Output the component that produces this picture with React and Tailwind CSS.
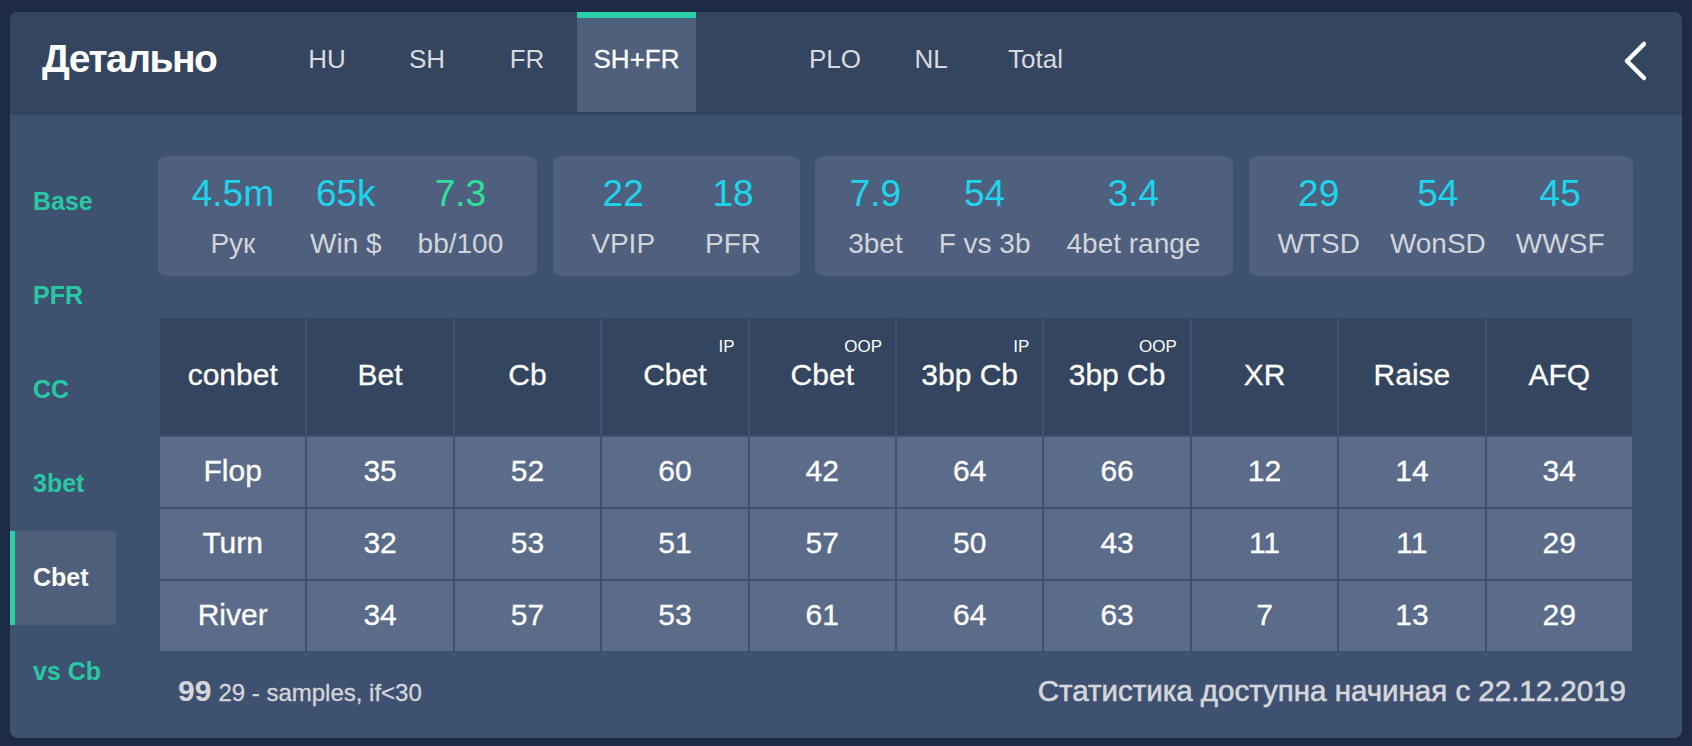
import React from "react";

const tabsLeft = [
  { label: "HU", cls: "w-[100px]" },
  { label: "SH", cls: "w-[100px]" },
  { label: "FR", cls: "w-[100px]" },
  { label: "SH+FR", cls: "w-[119px]", active: true },
];
const tabsRight = [
  { label: "PLO", cls: "w-[94px]" },
  { label: "NL", cls: "w-[98px]" },
  { label: "Total", cls: "w-[111px]" },
];

const nav = ["Base", "PFR", "CC", "3bet", "Cbet", "vs Cb"];

const statCards = [
  {
    cls: "w-[379px] gap-[36px]",
    items: [
      { v: "4.5m", l: "Рук" },
      { v: "65k", l: "Win $" },
      { v: "7.3", l: "bb/100", green: true },
    ],
  },
  {
    cls: "w-[247px] gap-[50px]",
    items: [
      { v: "22", l: "VPIP" },
      { v: "18", l: "PFR" },
    ],
  },
  {
    cls: "w-[418px] gap-[36px]",
    items: [
      { v: "7.9", l: "3bet" },
      { v: "54", l: "F vs 3b" },
      { v: "3.4", l: "4bet range" },
    ],
  },
  {
    cls: "w-[384px] gap-[30px]",
    items: [
      { v: "29", l: "WTSD" },
      { v: "54", l: "WonSD" },
      { v: "45", l: "WWSF" },
    ],
  },
];

const headers = [
  { t: "conbet" },
  { t: "Bet" },
  { t: "Cb" },
  { t: "Cbet", s: "IP" },
  { t: "Cbet", s: "OOP" },
  { t: "3bp Cb", s: "IP" },
  { t: "3bp Cb", s: "OOP" },
  { t: "XR" },
  { t: "Raise" },
  { t: "AFQ" },
];

const rows = [
  ["Flop", "35", "52", "60", "42", "64", "66", "12", "14", "34"],
  ["Turn", "32", "53", "51", "57", "50", "43", "11", "11", "29"],
  ["River", "34", "57", "53", "61", "64", "63", "7", "13", "29"],
];

export default function App() {
  return (
    <div className="h-[746px] bg-[#1d2b47] pt-[12px] px-[10px] font-['Liberation_Sans',Arial,sans-serif]">
      <div className="h-[726px] rounded-[8px] overflow-hidden bg-[#3f5171] flex flex-col">
        {/* Header */}
        <div className="h-[103px] shrink-0 bg-[#34455f] flex items-start pl-[32px] pr-[36px]">
          <div className="w-[235px] pt-[27px] text-[39px] font-bold tracking-[-1.5px] leading-none text-white">
            Детально
          </div>
          {tabsLeft.map((t) => (
            <div
              key={t.label}
              className={
                t.active
                  ? `${t.cls} h-[100px] border-t-[6px] border-[#2bcfa6] bg-[#4f607c] pt-[28px] text-center text-[26px] leading-none text-white [-webkit-text-stroke:0.3px_white]`
                  : `${t.cls} h-[100px] border-t-[6px] border-transparent pt-[28px] text-center text-[26px] leading-none text-[#d9dadf]`
              }
            >
              {t.label}
            </div>
          ))}
          <div className="w-[92px]" />
          {tabsRight.map((t) => (
            <div
              key={t.label}
              className={`${t.cls} h-[100px] border-t-[6px] border-transparent pt-[28px] text-center text-[26px] leading-none text-[#d9dadf]`}
            >
              {t.label}
            </div>
          ))}
          <div className="ml-auto mt-[29px]">
            <svg width="22" height="40" viewBox="0 0 22 40" fill="none">
              <polyline
                points="20,3 3,20 20,37"
                stroke="white"
                strokeWidth="4.5"
                strokeLinecap="round"
                strokeLinejoin="round"
              />
            </svg>
          </div>
        </div>

        {/* Body */}
        <div className="flex flex-1">
          {/* Side nav */}
          <div className="w-[106px] shrink-0 pt-[40px] flex flex-col">
            {nav.map((n) =>
              n === "Cbet" ? (
                <div
                  key={n}
                  className="w-[106px] h-[94px] flex items-center bg-[#4e5f7c] border-l-[5px] border-[#2bcfa6] pl-[18px] text-[25px] font-bold text-white"
                >
                  {n}
                </div>
              ) : (
                <div
                  key={n}
                  className="h-[94px] flex items-center pl-[23px] text-[25px] font-bold text-[#28c9a1]"
                >
                  {n}
                </div>
              )
            )}
          </div>

          {/* Main */}
          <div className="flex-1 ml-[42px] mr-[49px] pt-[41px] flex flex-col">
            <div className="flex justify-between">
              {statCards.map((c, i) => (
                <div
                  key={i}
                  className={`${c.cls} h-[120px] rounded-[8px] bg-[#4e607e] flex justify-center items-center`}
                >
                  {c.items.map((it) => (
                    <div key={it.l} className="flex flex-col items-center gap-[18px]">
                      <div
                        className={
                          it.green
                            ? "text-[37px] leading-none text-[#2ee09c]"
                            : "text-[37px] leading-none text-[#1dd5ec]"
                        }
                      >
                        {it.v}
                      </div>
                      <div className="text-[28px] leading-none text-[#d3d4da] whitespace-nowrap">
                        {it.l}
                      </div>
                    </div>
                  ))}
                </div>
              ))}
            </div>

            <div className="mt-[42px] ml-[2px] mr-[1px] grid grid-cols-10 gap-[2px]">
              {headers.map((h, i) => (
                <div
                  key={i}
                  className="relative h-[117px] bg-[#33455f] flex items-center justify-center text-[30px] leading-none text-white whitespace-nowrap pb-[4px] [-webkit-text-stroke:0.3px_white]"
                >
                  {h.t}
                  {h.s && (
                    <span className="absolute right-[13px] top-[20px] text-[17px] leading-none [-webkit-text-stroke:0px]">
                      {h.s}
                    </span>
                  )}
                </div>
              ))}
              {rows.map((r, ri) =>
                r.map((c, ci) => (
                  <div
                    key={`${ri}-${ci}`}
                    className="h-[70px] bg-[#5b6c8b] flex items-center justify-center text-[30px] leading-none text-white pb-[3px] [-webkit-text-stroke:0.3px_white]"
                  >
                    {c}
                  </div>
                ))
              )}
            </div>

            <div className="mt-[25px] flex items-baseline justify-between pl-[20px] pr-[7px] text-[#d5d6da]">
              <div className="flex items-baseline">
                <span className="text-[30px] font-bold leading-none">99</span>
                <span className="ml-[7px] text-[24px] leading-none [-webkit-text-stroke:0.3px_#d5d6da]">
                  29 - samples, if&lt;30
                </span>
              </div>
              <div className="text-[29.5px] leading-none [-webkit-text-stroke:0.6px_#d5d6da]">
                Статистика доступна начиная с 22.12.2019
              </div>
            </div>
          </div>
        </div>
      </div>
    </div>
  );
}
